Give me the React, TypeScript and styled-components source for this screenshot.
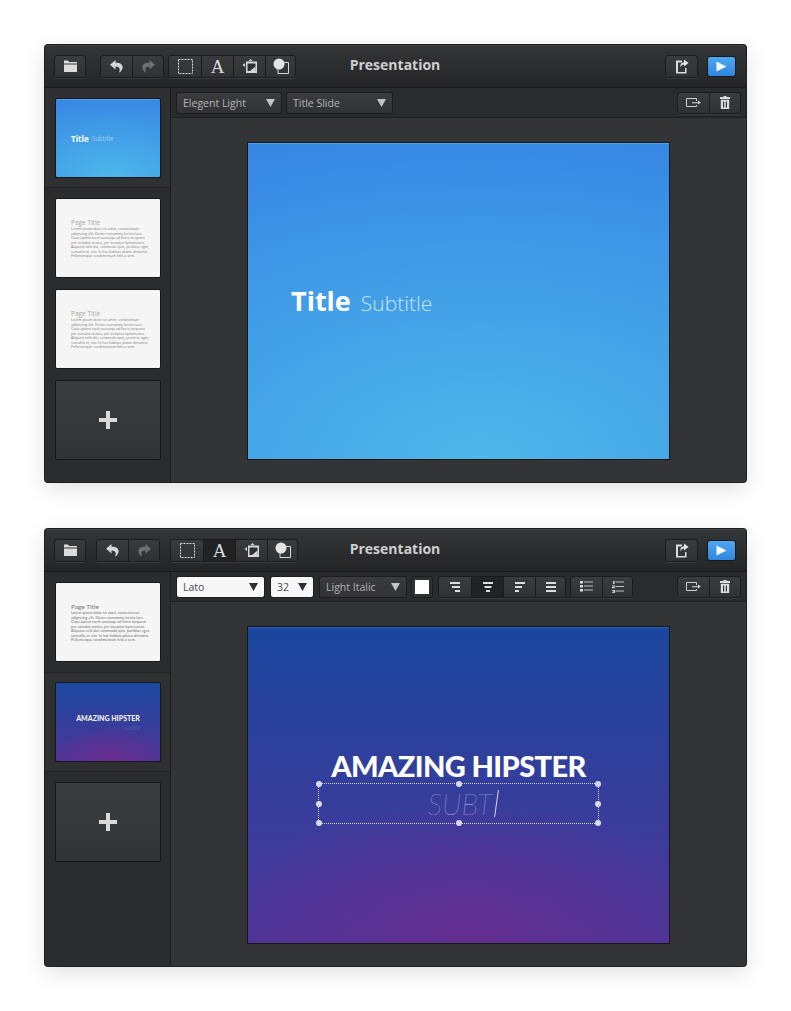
import React from "react";
import styled, { createGlobalStyle } from "styled-components";

const GlobalStyle = createGlobalStyle`
  html, body {
    margin: 0;
    padding: 0;
    background: #ffffff;
  }
  body {
    font-family: "Open Sans", "Liberation Sans", sans-serif;
  }
`;

const LOREM = [
  "Lorem ipsum dolor sit amet, consectetuer",
  "adipiscing elit. Donec nonummy lacinia lacs.",
  "Class aptent taciti sociosqu ad litora torquent",
  "per conubia nostra, per inceptos hymenaeos.",
  "Aliquam velit dui, commodo quis, porttitor eget,",
  "convallis et, nisi. In hac habitas platea dictumst.",
  "Pellentesque condimentum felis a sem.",
];

const ALIGN_ICONS = [
  [[0, 10], [2, 8], [5, 5]],
  [[0, 10], [1.5, 7], [3, 4]],
  [[0, 10], [0, 7], [0, 4]],
  [[0, 10], [0, 10], [0, 10]],
];

function FolderIcon() {
  return (
    <svg width="13" height="12" viewBox="0 0 13 12" fill="#dcdcdc">
      <path d="M0 0.500h4l1 1.500h8v1.500H0z" />
      <path d="M0 4.500h13V12H0z" />
    </svg>
  );
}

function UndoIcon({ flip, dim }: { flip?: boolean; dim?: boolean }) {
  return (
    <svg width="15" height="15" viewBox="0 0 15 15" fill={dim ? "#6f7072" : "#d6d6d6"} style={flip ? { transform: "scaleX(-1)" } : undefined}>
      <path d="M6.500 1L1 5.800l5.500 4.700V7.600c2.600 0 4.200 1 4.200 3.200 0 1-.3 2-.9 3 2.600-1.500 3.800-3.500 3.800-5.600 0-3-2.600-4.400-7.100-4.400z" />
    </svg>
  );
}

function MarqueeIcon() {
  return (
    <svg width="15" height="15" viewBox="0 0 15 15" fill="none" stroke="#d8d8d8" strokeDasharray="2 1">
      <rect x="0.500" y="0.500" width="14" height="14" />
    </svg>
  );
}

function ImageIcon() {
  return (
    <svg width="15" height="14" viewBox="0 0 15 14">
      <path d="M0.500 6L3 4v4z" fill="#d8d8d8" />
      <path d="M6.500 2L8.500 0l2 2z" fill="#d8d8d8" />
      <rect x="4" y="2.500" width="11" height="11.500" fill="#d8d8d8" />
      <rect x="5.500" y="4.500" width="8" height="7.500" fill="#2f3032" />
      <path d="M8 12l5.500-4.500V12z" fill="#d8d8d8" />
    </svg>
  );
}

function ShapeIcon() {
  return (
    <svg width="16" height="16" viewBox="0 0 16 16">
      <path d="M7 4.500h8.500v11H5V11" fill="none" stroke="#d8d8d8" />
      <circle cx="6" cy="6" r="5.500" fill="#e4e4e4" />
    </svg>
  );
}

function ShareIcon() {
  return (
    <svg width="14" height="15" viewBox="0 0 14 15">
      <path d="M1 1.500h6v2H3v9.500h7V9h1.500v5.500H1z" fill="#dcdcdc" />
      <path d="M9 0.500l4.500 3.500L9 7.500V5.500C7.500 5.500 6 6.500 5 8.500c.2-3.500 1.500-5 4-5.200z" fill="#e4e4e4" />
    </svg>
  );
}

function PlayIcon() {
  return (
    <svg width="11" height="11" viewBox="0 0 11 11">
      <path d="M0.500 0.500L10.500 5.500L0.500 10.500z" fill="#f4f9fe" />
    </svg>
  );
}

function ExportIcon() {
  return (
    <svg width="15" height="10" viewBox="0 0 15 10">
      <path d="M10.500 3V.5H.5v8h10V7" fill="none" stroke="#cfcfcf" />
      <path d="M6 4.200h6V2.600l2.800 2-2.800 2V5.200H6z" fill="#dcdcdc" />
    </svg>
  );
}

function TrashIcon() {
  return (
    <svg width="10" height="13" viewBox="0 0 10 13" fill="#dcdcdc">
      <path d="M3.500 0h3v1H10v2H0V1h3.500z" />
      <path d="M.8 3.800h8.400V13H.8zM3 5.500v6h1.200v-6zM5.800 5.500v6H7v-6z" fillRule="evenodd" />
    </svg>
  );
}

function AlignIcon({ bars }: { bars: number[][] }) {
  return (
    <svg width="10" height="10" viewBox="0 0 10 10" fill="#dcdcdc">
      {bars.map(([x, w], i) => (
        <rect key={i} x={x} y={i * 4} width={w} height="2" />
      ))}
    </svg>
  );
}

function BulletIcon() {
  return (
    <svg width="13" height="11" viewBox="0 0 13 11" fill="#dcdcdc">
      <rect x="0" y="0" width="3" height="2.500" />
      <rect x="0" y="4" width="3" height="2.500" />
      <rect x="0" y="8" width="3" height="2.500" />
      <rect x="4" y="0.500" width="9" height="1" fill="#c0c0c0" />
      <rect x="4" y="4.500" width="9" height="1" fill="#c0c0c0" />
      <rect x="4" y="8.500" width="9" height="1" fill="#c0c0c0" />
    </svg>
  );
}

function NumberIcon() {
  return (
    <svg width="12" height="12" viewBox="0 0 12 12" fill="#d8d8d8">
      <rect x="1" y="0" width="1.500" height="3" />
      <path d="M0 4.500h3v1.200H1.400v.6H3v1H0V6h1.600v-.4H0z" />
      <path d="M0 9h3v3H0v-.8h1.800v-.4H.5v-.6h1.300v-.4H0z" />
      <rect x="3.500" y="0.500" width="8.500" height="1" fill="#c0c0c0" />
      <rect x="3.500" y="5" width="8.500" height="1" fill="#c0c0c0" />
      <rect x="3.500" y="9.500" width="8.500" height="1" fill="#c0c0c0" />
    </svg>
  );
}

function CaretIcon({ dark }: { dark?: boolean }) {
  return (
    <svg width="9" height="8" viewBox="0 0 9 8">
      <path d="M0 0h9L4.500 8z" fill={dark ? "#2d2e30" : "#c4c4c4"} />
    </svg>
  );
}

function Header({ undoGap, active }: { undoGap: number; active?: boolean }) {
  return (
    <Toolbar>
      <ToolSide>
        <BtnGroup>
          <Btn $w={30}><FolderIcon /></Btn>
        </BtnGroup>
        <BtnGroup $ml={undoGap}>
          <Btn $w={31}><UndoIcon /></Btn>
          <Btn $w={31}><UndoIcon flip dim /></Btn>
        </BtnGroup>
        <BtnGroup $ml={active ? 12 : 6}>
          <Btn $w={32}><MarqueeIcon /></Btn>
          <Btn $w={32} $pressed={active}><LetterA>A</LetterA></Btn>
          <Btn $w={32}><ImageIcon /></Btn>
          <Btn $w={30}><ShapeIcon /></Btn>
        </BtnGroup>
      </ToolSide>
      <AppTitle>Presentation</AppTitle>
      <ToolSide $end>
        <BtnGroup>
          <Btn $w={31}><ShareIcon /></Btn>
        </BtnGroup>
        <PlayButton><PlayIcon /></PlayButton>
      </ToolSide>
    </Toolbar>
  );
}

function SlideActions() {
  return (
    <BtnGroup $auto $h={20}>
      <Btn $w={31}><ExportIcon /></Btn>
      <Btn $w={31}><TrashIcon /></Btn>
    </BtnGroup>
  );
}

function PageThumb({ top, soft }: { top: number; soft?: boolean }) {
  return (
    <ThumbSlot $top={top}>
      <PaperThumb>
        <PageTitle $soft={soft}>Page Title</PageTitle>
        <PageBody $soft={soft}>
          {LOREM.map((line) => (
            <div key={line}>{line}</div>
          ))}
        </PageBody>
      </PaperThumb>
    </ThumbSlot>
  );
}

function AddSlide({ top }: { top: number }) {
  return (
    <ThumbSlot $top={top}>
      <AddThumb>
        <svg width="18" height="18" viewBox="0 0 18 18">
          <path d="M7 0h4v7h7v4h-7v7H7v-7H0V7h7z" fill="#d9d9d9" />
        </svg>
      </AddThumb>
    </ThumbSlot>
  );
}

export default function App() {
  return (
    <Page>
      <GlobalStyle />
      <Win>
        <Header undoGap={16} />
        <WinBody>
          <Sidebar>
            <SelectedRow>
              <BlueThumb>
                <ThumbTitle>Title</ThumbTitle>
                <ThumbSubtitle>Subtitle</ThumbSubtitle>
              </BlueThumb>
            </SelectedRow>
            <PageThumb top={10} soft />
            <PageThumb top={12} soft />
            <AddSlide top={11} />
          </Sidebar>
          <Main>
            <OptionBar>
              <DarkSelect $w={104}>Elegent Light<CaretIcon /></DarkSelect>
              <DarkSelect $w={105} $ml={6}>Title Slide<CaretIcon /></DarkSelect>
              <SlideActions />
            </OptionBar>
            <Stage>
              <BlueSlide>
                <SlideTitle>Title</SlideTitle>
                <SlideSubtitle>Subtitle</SlideSubtitle>
              </BlueSlide>
            </Stage>
          </Main>
        </WinBody>
      </Win>

      <Win>
        <Header undoGap={12} active />
        <WinBody>
          <Sidebar>
            <PageThumb top={10} />
            <SelectedRow>
              <PurpleThumb>
                <ThumbHeadline>AMAZING HIPSTER</ThumbHeadline>
                <ThumbSubt>SUBT</ThumbSubt>
              </PurpleThumb>
            </SelectedRow>
            <AddSlide top={10} />
          </Sidebar>
          <Main>
            <OptionBar>
              <LightSelect $w={87}>Lato<CaretIcon dark /></LightSelect>
              <LightSelect $w={42} $ml={7}>32<CaretIcon dark /></LightSelect>
              <DarkSelect $w={86} $ml={7}>Light Italic<CaretIcon /></DarkSelect>
              <Swatch />
              <BtnGroup $ml={7} $h={20}>
                {ALIGN_ICONS.map((bars, i) => (
                  <Btn key={i} $w={i === 3 ? 30 : 32} $pressed={i === 1}>
                    <AlignIcon bars={bars} />
                  </Btn>
                ))}
              </BtnGroup>
              <BtnGroup $ml={6} $h={20}>
                <Btn $w={31}><BulletIcon /></Btn>
                <Btn $w={30}><NumberIcon /></Btn>
              </BtnGroup>
              <SlideActions />
            </OptionBar>
            <Stage>
              <PurpleSlide>
                <Headline>AMAZING HIPSTER</Headline>
                <TextBox>
                  <Handle $x={0} $y={0} />
                  <Handle $x={50} $y={0} />
                  <Handle $x={100} $y={0} />
                  <Handle $x={0} $y={50} />
                  <Handle $x={100} $y={50} />
                  <Handle $x={0} $y={100} />
                  <Handle $x={50} $y={100} />
                  <Handle $x={100} $y={100} />
                  <Subt>SUBT</Subt>
                  <TextCaret />
                </TextBox>
              </PurpleSlide>
            </Stage>
          </Main>
        </WinBody>
      </Win>
    </Page>
  );
}

const Page = styled.div`
  width: 791px;
  height: 1011px;
  box-sizing: border-box;
  padding: 45px 45px 0;
  display: flex;
  flex-direction: column;
  gap: 47px;
  background: #fff;
  overflow: hidden;
`;

const Win = styled.div`
  width: 701px;
  height: 437px;
  display: flex;
  flex-direction: column;
  background: #333436;
  border-radius: 3px;
  overflow: hidden;
  box-shadow: 0 0 0 1px #1d1e1f, 0 6px 22px rgba(0, 0, 0, 0.13);
`;

const Toolbar = styled.div`
  height: 42px;
  flex: none;
  display: flex;
  align-items: center;
  padding: 0 11px 0 10px;
  background: linear-gradient(#343537, #242527);
  border-bottom: 1px solid #19191a;
  box-shadow: inset 0 1px 0 #3f4042;
`;

const ToolSide = styled.div<{ $end?: boolean }>`
  flex: 1;
  display: flex;
  align-items: center;
  justify-content: ${(p) => (p.$end ? "flex-end" : "flex-start")};
`;

const BtnGroup = styled.div<{ $ml?: number; $auto?: boolean; $h?: number }>`
  display: flex;
  height: ${(p) => p.$h ?? 21}px;
  margin-left: ${(p) => (p.$auto ? "auto" : `${p.$ml ?? 0}px`)};
  border-radius: 3px;
  box-shadow: 0 0 0 1px #1b1c1d, 0 1px 0 1px #3a3b3d;
  overflow: hidden;
`;

const Btn = styled.div<{ $w: number; $pressed?: boolean }>`
  width: ${(p) => p.$w}px;
  box-sizing: border-box;
  display: flex;
  align-items: center;
  justify-content: center;
  background: ${(p) => (p.$pressed ? "#212224" : "linear-gradient(#3a3b3d, #303133)")};
  & + & {
    border-left: 1px solid #1b1c1d;
  }
`;

const LetterA = styled.span`
  font-family: "Liberation Serif", serif;
  font-size: 19px;
  line-height: 1;
  color: #dcdcdc;
`;

const AppTitle = styled.div`
  flex: none;
  font-size: 14px;
  font-weight: 700;
  color: #cfcfcf;
  padding-bottom: 3px;
`;

const PlayButton = styled.div`
  width: 27px;
  height: 19px;
  margin-left: 11px;
  display: flex;
  align-items: center;
  justify-content: center;
  border-radius: 2px;
  background: linear-gradient(#4ea7f0, #2f86e0);
  box-shadow: 0 0 0 1px #17181a;
`;

const WinBody = styled.div`
  flex: 1;
  display: flex;
  min-height: 0;
`;

const Sidebar = styled.div`
  width: 125px;
  flex: none;
  display: flex;
  flex-direction: column;
  background: #2b2c2e;
  border-right: 1px solid #1d1e1f;
`;

const ThumbSlot = styled.div<{ $top: number }>`
  padding: ${(p) => p.$top}px 9px 10px 10px;
  height: 80px;
  box-sizing: content-box;
  & + & {
    padding-top: ${(p) => p.$top - 10}px;
  }
`;

const SelectedRow = styled.div`
  padding: 10px 9px 9px 10px;
  height: 80px;
  background: #2f3032;
  border-bottom: 1px solid #232425;
  ${ThumbSlot} + & {
    border-top: 1px solid #232425;
    padding-top: 9px;
  }
`;

const ThumbBase = styled.div`
  width: 106px;
  height: 80px;
  box-sizing: border-box;
  border: 1px solid #17181a;
  border-radius: 2px;
  overflow: hidden;
`;

const BlueThumb = styled(ThumbBase)`
  display: flex;
  align-items: center;
  gap: 3px;
  padding-left: 15px;
  color: #fff;
  background: radial-gradient(ellipse 150% 110% at 55% 100%, #4eb8ea, #3585e4);
  box-shadow: inset 0 1px 0 #559fee;
`;

const ThumbTitle = styled.span`
  font-size: 8px;
  font-weight: 700;
`;

const ThumbSubtitle = styled.span`
  font-size: 6.300px;
  font-weight: 300;
  color: rgba(255, 255, 255, 0.7);
`;

const PaperThumb = styled(ThumbBase)`
  background: #f5f5f5;
  padding: 19px 0 0 15px;
  white-space: nowrap;
`;

const PageTitle = styled.div<{ $soft?: boolean }>`
  font-family: ${(p) => (p.$soft ? '"Open Sans"' : "Lato")}, sans-serif;
  font-size: 6.500px;
  line-height: 9px;
  color: ${(p) => (p.$soft ? "#a8a8a8" : "#777")};
`;

const PageBody = styled.div<{ $soft?: boolean }>`
  font-family: ${(p) => (p.$soft ? '"Open Sans"' : "Lato")}, sans-serif;
  font-size: ${(p) => (p.$soft ? 3.5 : 3.8)}px;
  line-height: 4.500px;
  color: ${(p) => (p.$soft ? "#7c7c7c" : "#707070")};
`;

const AddThumb = styled(ThumbBase)`
  display: flex;
  align-items: center;
  justify-content: center;
  background: linear-gradient(#3b3c3e, #323335);
`;

const PurpleThumb = styled(ThumbBase)`
  display: flex;
  flex-direction: column;
  align-items: center;
  justify-content: center;
  padding-top: 2px;
  background: radial-gradient(ellipse 60% 45% at 52% 100%, #6a2e90, rgba(106, 46, 144, 0)),
    linear-gradient(#1b499f, #4d3498);
`;

const ThumbHeadline = styled.div`
  font-family: Lato, sans-serif;
  font-size: 7px;
  font-weight: 900;
  line-height: 9px;
  color: #eee;
  white-space: nowrap;
`;

const ThumbSubt = styled.div`
  align-self: flex-end;
  margin-right: 20px;
  font-family: Lato, sans-serif;
  font-size: 6.500px;
  line-height: 9px;
  color: rgba(255, 255, 255, 0.14);
`;

const Main = styled.div`
  flex: 1;
  min-width: 0;
  display: flex;
  flex-direction: column;
`;

const OptionBar = styled.div`
  height: 30px;
  flex: none;
  box-sizing: border-box;
  display: flex;
  align-items: center;
  padding: 0 6px;
  background: #2a2b2d;
  border-bottom: 1px solid #1f2021;
`;

const SelectBase = styled.div<{ $w: number; $ml?: number }>`
  width: ${(p) => p.$w}px;
  height: 20px;
  flex: none;
  margin-left: ${(p) => p.$ml ?? 0}px;
  box-sizing: border-box;
  display: flex;
  align-items: center;
  justify-content: space-between;
  padding: 0 6px;
  font-size: 10.500px;
  border-radius: 2px;
`;

const DarkSelect = styled(SelectBase)`
  color: #b4b5b6;
  background: linear-gradient(#3a3b3d, #313234);
  box-shadow: 0 0 0 1px #1c1d1e;
`;

const LightSelect = styled(SelectBase)`
  color: #4a4a4a;
  background: #f7f7f7;
  box-shadow: 0 0 0 1px #1c1d1e;
`;

const Swatch = styled.div`
  width: 14px;
  height: 14px;
  flex: none;
  margin-left: 6px;
  background: #fff;
  border: 3px solid #2f3032;
  box-shadow: 0 0 0 1px #1c1d1e;
  border-radius: 2px;
`;

const Stage = styled.div`
  flex: 1;
  display: flex;
  align-items: flex-start;
  justify-content: center;
  padding-top: 24px;
`;

const SlideBase = styled.div`
  width: 423px;
  height: 318px;
  box-sizing: border-box;
  border: 1px solid #17181a;
  flex: none;
  display: flex;
`;

const BlueSlide = styled(SlideBase)`
  align-items: baseline;
  padding: 142px 0 0 43px;
  gap: 10px;
  color: #fff;
  background: radial-gradient(ellipse 150% 110% at 55% 100%, #4eb8ea, #3585e4);
  box-shadow: inset 0 1px 0 #559fee;
`;

const SlideTitle = styled.span`
  font-size: 27px;
  line-height: 32px;
  font-weight: 700;
`;

const SlideSubtitle = styled.span`
  font-size: 21px;
  font-weight: 300;
  color: rgba(255, 255, 255, 0.72);
`;

const PurpleSlide = styled(SlideBase)`
  flex-direction: column;
  align-items: center;
  padding-top: 122px;
  background: radial-gradient(ellipse 60% 45% at 52% 100%, #642e90, rgba(100, 46, 144, 0)),
    linear-gradient(#1b479e, #4c3599);
  box-shadow: inset 0 1px 0 #2d5cb0;
`;

const Headline = styled.div`
  font-family: Lato, sans-serif;
  font-size: 29px;
  font-weight: 900;
  line-height: 34px;
  letter-spacing: -0.6px;
  color: #fff;
  white-space: nowrap;
`;

const TextBox = styled.div`
  position: relative;
  width: 281px;
  height: 41px;
  box-sizing: border-box;
  border: 1px dotted rgba(255, 255, 255, 0.75);
  display: flex;
  align-items: center;
  justify-content: center;
`;

const Handle = styled.span<{ $x: number; $y: number }>`
  position: absolute;
  left: ${(p) => p.$x}%;
  top: ${(p) => p.$y}%;
  width: 6px;
  height: 6px;
  margin: -3px 0 0 -3px;
  border-radius: 50%;
  background: #dcd9ee;
`;

const Subt = styled.span`
  font-family: Lato, sans-serif;
  font-size: 29px;
  font-style: italic;
  font-weight: 100;
  color: rgba(255, 255, 255, 0.7);
  margin-left: 8px;
`;

const TextCaret = styled.span`
  width: 1px;
  height: 27px;
  margin-left: 4px;
  background: #d8d4ec;
  transform: skewX(-8deg);
`;
